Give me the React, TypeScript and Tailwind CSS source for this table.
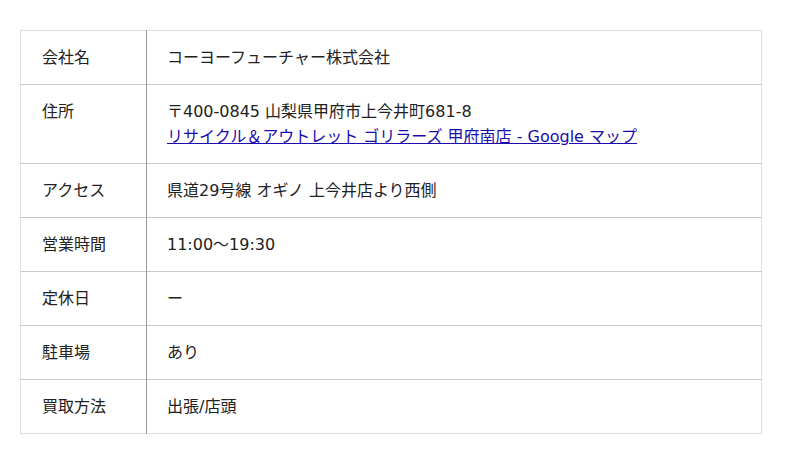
const rows: { label: string; value: React.ReactNode }[] = [
  { label: '会社名', value: 'コーヨーフューチャー株式会社' },
  {
    label: '住所',
    value: (
      <>
        〒400-0845 山梨県甲府市上今井町681-8
        <br />
        <a href="#" className="text-[#1a0dab] underline">
          リサイクル＆アウトレット ゴリラーズ 甲府南店 - Google マップ
        </a>
      </>
    ),
  },
  { label: 'アクセス', value: '県道29号線 オギノ 上今井店より西側' },
  { label: '営業時間', value: '11:00～19:30' },
  { label: '定休日', value: 'ー' },
  { label: '駐車場', value: 'あり' },
  { label: '買取方法', value: '出張/店頭' },
];

export default function App() {
  return (
    <div className="h-[464px] w-[800px] bg-white px-5 pt-[30px] font-['DejaVu_Sans','Noto_Sans_CJK_JP',sans-serif] text-[16px] leading-[25px] text-[#222]">
      <table className="w-[742px] border-collapse border border-[#ddd]">
        <tbody>
          {rows.map((row) => (
            <tr key={row.label} className="border-b border-[#c8c8c8] last:border-[#ddd]">
              <th className="w-[126px] border-r border-[#999] py-[14px] pl-[21px] text-left align-top font-normal">
                {row.label}
              </th>
              <td className="py-[14px] pl-5 align-top">{row.value}</td>
            </tr>
          ))}
        </tbody>
      </table>
    </div>
  );
}
